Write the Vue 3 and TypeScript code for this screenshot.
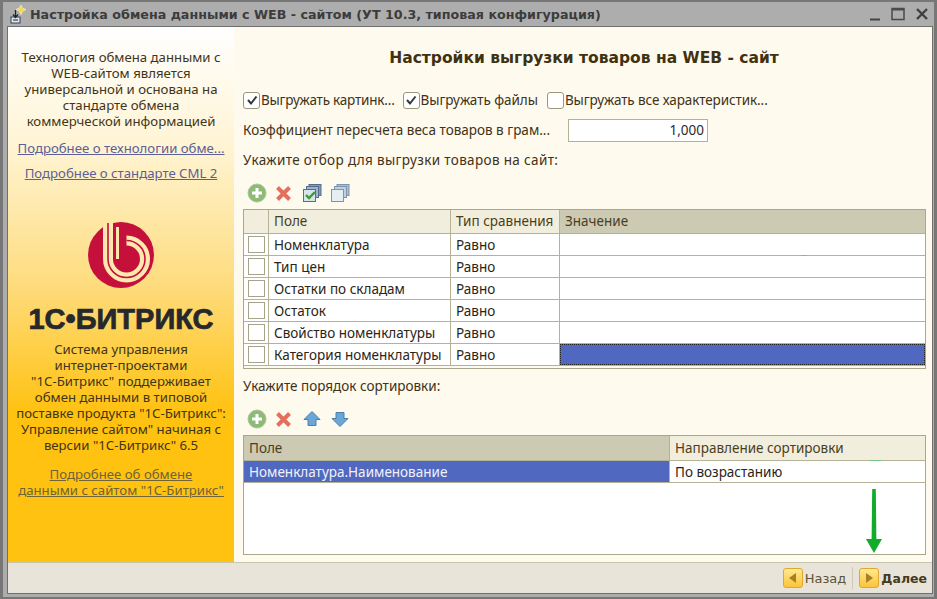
<script setup lang="ts">
const filterRows: string[] = ['Номенклатура', 'Тип цен', 'Остатки по складам', 'Остаток', 'Свойство номенклатуры', 'Категория номенклатуры']
</script>

<template>
  <div class="window">
    <header class="titlebar">
      <svg class="app-icon" width="19" height="20" viewBox="2 0 19 20">
        <path d="M15 1l1.600 3.200L20 5.500l-3.200 1.600L15 10.500l-1.700-3.400L10 5.500l3.300-1.300z" fill="#f7d84e" stroke="#fff6c0" stroke-width=".6"/>
        <rect x="5" y="13" width="9" height="6" fill="#dfe6ee" stroke="#3a4150"/>
        <path d="M9.500 6v7M7 10.500l2.500 3 2.500-3" fill="none" stroke="#20242c" stroke-width="1.300"/>
        <path d="M7 16h5" stroke="#20242c"/>
      </svg>
      <span class="title">Настройка обмена данными с WEB - сайтом (УТ 10.3, типовая конфигурация)</span>
      <span class="win-btns">
        <svg width="13" height="13" viewBox="0 0 13 13"><path d="M2 11.500h10" stroke="#444" stroke-width="2"/></svg>
        <svg width="14" height="14" viewBox="0 0 14 14"><rect x="1" y="1.500" width="12" height="11" fill="none" stroke="#4a4a4a" stroke-width="1.500"/><path d="M1 2.500h12" stroke="#4a4a4a" stroke-width="2"/></svg>
        <svg width="14" height="14" viewBox="0 0 14 14"><path d="M2 2l10 10M12 2L2 12" stroke="#404040" stroke-width="2.400"/></svg>
      </span>
    </header>

    <div class="frame">
      <div class="content">
        <aside class="side">
          <p class="side-text intro">Технология обмена данными с<br>WEB-сайтом является<br>универсальной и основана на<br>стандарте обмена<br>коммерческой информацией</p>
          <a class="link first">Подробнее о технологии обме...</a>
          <a class="link second">Подробнее о стандарте CML 2</a>
          <svg class="logo" width="80" height="80" viewBox="0 0 80 80">
            <circle cx="40" cy="40" r="33" fill="#c4103a"/>
            <path d="M27 8V44A18.500 18.500 0 1 0 45.500 25.500" fill="none" stroke="#fde9ae" stroke-width="10"/>
            <path d="M27 8V44A18.500 18.500 0 1 0 45.500 25.500" fill="none" stroke="#c4103a" stroke-width="1.600"/>
            <circle cx="45.500" cy="44" r="9.500" fill="#c4103a"/>
            <path d="M36.500 12V44" stroke="#fde9ae" stroke-width="3"/>
          </svg>
          <div class="brand">1С•БИТРИКС</div>
          <p class="side-text about">Система управления<br>интернет-проектами<br>"1С-Битрикс" поддерживает<br>обмен данными в типовой<br>поставке продукта "1С-Битрикс":<br>Управление сайтом" начиная с<br>версии "1С-Битрикс" 6.5</p>
          <a class="link third">Подробнее об обмене<br>данными с сайтом "1С-Битрикс"</a>
        </aside>

        <main class="main">
          <h1 class="heading">Настройки выгрузки товаров на WEB - сайт</h1>

          <div class="checks">
            <label class="check c1"><span class="box"><svg width="12" height="12" viewBox="0 0 12 12"><path d="M2 6l3 3.500L10.500 2.500" fill="none" stroke="#33363c" stroke-width="2"/></svg></span>Выгружать картинк...</label>
            <label class="check c2"><span class="box"><svg width="12" height="12" viewBox="0 0 12 12"><path d="M2 6l3 3.500L10.500 2.500" fill="none" stroke="#33363c" stroke-width="2"/></svg></span>Выгружать файлы</label>
            <label class="check c3"><span class="box"></span>Выгружать все характеристик...</label>
          </div>

          <div class="coef">
            <span class="coef-label">Коэффициент пересчета веса товаров в грам...</span>
            <span class="input">1,000</span>
          </div>

          <div class="caption wide">Укажите отбор для выгрузки товаров на сайт:</div>

          <div class="toolbar">
            <svg width="20" height="20" viewBox="0 0 20 20"><circle cx="10" cy="10" r="9" fill="#8dbb76" stroke="#a6c89a"/><path d="M10 5v10M5 10h10" stroke="#fff" stroke-width="3"/></svg>
            <svg width="17" height="17" viewBox="0 0 17 17"><path d="M2.500 2.500l12 12M14.500 2.500l-12 12" stroke="#e2705f" stroke-width="4"/></svg>
            <svg width="20" height="20" viewBox="0 0 20 20"><rect x="7" y="1.500" width="12" height="11" fill="#7f9bb5" stroke="#54708c"/><rect x="4.500" y="3.500" width="12" height="11" fill="#9db5ca" stroke="#54708c"/><rect x="1.500" y="6.500" width="12" height="12" fill="#d8e4ec" stroke="#54708c"/><path d="M4 12l3 3 6-6" fill="none" stroke="#3b9b34" stroke-width="2.400"/></svg>
            <svg width="20" height="20" viewBox="0 0 20 20"><rect x="7" y="1.500" width="12" height="11" fill="#a9bdd0" stroke="#7d96ad"/><rect x="4.500" y="3.500" width="12" height="11" fill="#c0d0dd" stroke="#7d96ad"/><rect x="1.500" y="6.500" width="12" height="12" fill="#e6eef3" stroke="#7d96ad"/></svg>
          </div>

          <div class="grid filter">
            <div class="row head">
              <div class="cell c-mark head-light"></div>
              <div class="cell c-field head-light">Поле</div>
              <div class="cell c-type head-light">Тип сравнения</div>
              <div class="cell c-value head-dark">Значение</div>
            </div>
            <div v-for="(name, i) in filterRows" :key="name" class="row">
              <div class="cell c-mark"><span class="mark"></span></div>
              <div class="cell c-field">{{ name }}</div>
              <div class="cell c-type">Равно</div>
              <div class="cell c-value" :class="{ selected: i === filterRows.length - 1 }"></div>
            </div>
            <div class="tail"></div>
          </div>

          <div class="caption second-caption">Укажите порядок сортировки:</div>

          <div class="toolbar">
            <svg width="20" height="20" viewBox="0 0 20 20"><circle cx="10" cy="10" r="9" fill="#8dbb76" stroke="#a6c89a"/><path d="M10 5v10M5 10h10" stroke="#fff" stroke-width="3"/></svg>
            <svg width="17" height="17" viewBox="0 0 17 17"><path d="M2.500 2.500l12 12M14.500 2.500l-12 12" stroke="#e2705f" stroke-width="4"/></svg>
            <svg width="20" height="20" viewBox="0 0 20 20"><path d="M10 2.500L18 10.500H14V16.500H6V10.500H2z" fill="#6aa6d6" stroke="#4a80ad"/></svg>
            <svg width="20" height="20" viewBox="0 0 20 20"><path d="M10 17.500L2 9.500H6V3.500H14V9.500H18z" fill="#6aa6d6" stroke="#4a80ad"/></svg>
          </div>

          <div class="grid sort">
            <div class="row head sort-head">
              <div class="cell s-field head-dark">Поле</div>
              <div class="cell s-dir head-light">Направление сортировки</div>
            </div>
            <div class="row sort-row">
              <div class="cell s-field selected">Номенклатура.Наименование</div>
              <div class="cell s-dir">По возрастанию</div>
            </div>
            <div class="sort-empty"></div>
          </div>

          <svg class="arrow" width="18" height="66" viewBox="0 0 18 66"><path d="M7.200 1h3.600l.6 50H17L9 65 1 51h5.600z" fill="#12ab2a"/></svg>
          <span class="speck s1"></span>
          <span class="speck s2"></span>
        </main>
      </div>

      <footer class="footer">
        <span class="nav-btn"><svg width="9" height="12" viewBox="0 0 9 12"><path d="M8 1v10L1 6z" fill="#a78024"/></svg></span>
        <span class="nav-label">Назад</span>
        <span class="sep"></span>
        <span class="nav-btn"><svg width="9" height="12" viewBox="0 0 9 12"><path d="M1 1v10l7-5z" fill="#a78024"/></svg></span>
        <span class="nav-label strong">Далее</span>
      </footer>
    </div>
  </div>
</template>

<style scoped>
.window {
  width: 937px;
  height: 599px;
  box-sizing: border-box;
  display: flex;
  flex-direction: column;
  background: #adadad;
  border: solid #777;
  border-width: 2px 3px 2px 3px;
  padding: 0 2px 3px 5px;
  font-family: "Noto Sans", sans-serif;
  font-size: 13.500px;
  color: #3e3218;
  overflow: hidden;
}
.titlebar {
  height: 24px;
  flex: none;
  display: flex;
  align-items: center;
}
.app-icon { margin-right: 3px; flex: none; }
.title {
  font-family: "DejaVu Sans", sans-serif;
  font-weight: 700;
  font-size: 12.700px;
  color: #3c3c3c;
  white-space: nowrap;
}
.win-btns {
  margin-left: auto;
  display: flex;
  align-items: center;
  gap: 10px;
  margin-right: 3px;
}
.frame {
  flex: 1;
  min-height: 0;
  display: flex;
  flex-direction: column;
  border: 1px solid #6f6f6f;
  margin: 0 -1px;
}
.content {
  flex: 1;
  min-height: 0;
  display: flex;
}
.side {
  width: 226px;
  flex: none;
  display: flex;
  flex-direction: column;
  align-items: center;
  text-align: center;
  font-size: 13.200px;
  background: linear-gradient(180deg, #ffffff 0%, #fff4d4 22%, #fedc7e 48%, #ffc211 72%, #ffc211 100%);
}
.side-text { margin: 0; line-height: 16px; white-space: nowrap; color: #3f3518; }
.intro { margin-top: 22px; }
.link {
  text-decoration: underline;
  white-space: nowrap;
  line-height: 16px;
  color: #5d5f98;
}
.first { margin-top: 11px; }
.second { margin-top: 9px; }
.logo { margin-top: 34px; flex: none; }
.brand {
  margin-top: 8px;
  font-family: "Liberation Sans", sans-serif;
  font-weight: 700;
  font-size: 29px;
  line-height: 32px;
  color: #26282c;
  -webkit-text-stroke: .7px #26282c;
  white-space: nowrap;
}
.about { margin-top: 6px; }
.third { margin-top: 13px; color: #6f6338; }
.main {
  flex: 1;
  min-width: 0;
  position: relative;
  box-sizing: border-box;
  padding: 0 4px 0 9px;
  background: #fffaee;
}
.heading {
  margin: 20px 3px 0 0;
  font-family: "DejaVu Sans", sans-serif;
  font-size: 15.500px;
  line-height: 22px;
  font-weight: 700;
  text-align: center;
  color: #3e3212;
}
.checks {
  margin-top: 22px;
  display: flex;
  height: 18px;
  align-items: center;
}
.check { display: flex; align-items: center; white-space: nowrap; gap: 1px; }
.c1 { margin-right: 8px; letter-spacing: -.2px; }
.c2 { margin-right: 9px; letter-spacing: -.05px; }
.c3 { letter-spacing: -.1px; }
.box {
  width: 15px;
  height: 15px;
  border: 1px solid #9a967f;
  border-radius: 3px;
  background: #fff;
  display: flex;
  align-items: center;
  justify-content: center;
  flex: none;
}
.coef {
  margin-top: 10px;
  display: flex;
  align-items: center;
  height: 23px;
}
.coef-label { width: 325px; white-space: nowrap; flex: none; padding-bottom: 2px; box-sizing: border-box; }
.input {
  width: 140px;
  height: 23px;
  box-sizing: border-box;
  border: 1px solid #b5b196;
  background: #fff;
  text-align: right;
  padding-right: 3px;
  line-height: 21px;
  color: #2b2b2b;
}
.caption { margin-top: 11px; line-height: 14px; height: 16px; }
.wide { letter-spacing: .35px; }
.second-caption { margin-top: 10px; }
.toolbar {
  margin-top: 14px;
  height: 20px;
  display: flex;
  align-items: center;
  gap: 8px;
  padding-left: 4px;
}
.toolbar svg:nth-child(2) { margin-right: 2px; }
.grid {
  width: 683px;
  box-sizing: border-box;
  margin-top: 6px;
  border: 1px solid #aaa88c;
  background: #fff;
}
.row { display: flex; height: 22px; border-bottom: 1px solid #b5b296; box-sizing: border-box; }
.head { height: 24px; }
.cell {
  box-sizing: border-box;
  border-right: 1px solid #b5b296;
  padding-left: 5px;
  line-height: 22px;
  white-space: nowrap;
  overflow: hidden;
  color: #2b2416;
}
.head .cell { line-height: 23px; color: #4a3e22; }
.head-light { background: #f1eedd; }
.head-dark { background: #cdcab4; }
.c-mark { width: 25px; padding: 0 0 0 1px; display: flex; align-items: center; justify-content: center; }
.c-field { width: 182px; }
.c-type { width: 109px; }
.c-value { flex: 1; border-right: 0; }
.mark { width: 17px; height: 17px; box-sizing: border-box; border: 1px solid #a6a38a; background: #fff; }
.selected { background: #5068bf; color: #f0f2fa; }
.c-value.selected { outline: 1px dotted #222; outline-offset: -1px; }
.tail { height: 2px; background: #fffaee; }
.sort { height: 120px; }
.sort-head { height: 25px; }
.sort-row { height: 22px; }
.s-field { width: 426px; }
.s-dir { flex: 1; border-right: 0; }
.sort .head .cell { line-height: 24px; }
.arrow { position: absolute; left: 631px; top: 461px; }
.speck { position: absolute; height: 1px; background: #72c47e; }
.s1 { left: 567px; top: 228px; width: 5px; }
.s2 { left: 635px; top: 433px; width: 12px; }
.footer {
  height: 31px;
  flex: none;
  box-sizing: border-box;
  border-top: 1px solid #c9c6ae;
  background: #e9e4d9;
  display: flex;
  align-items: center;
  justify-content: flex-end;
  padding-right: 5px;
  color: #5d5338;
  font-family: "DejaVu Sans", sans-serif;
  font-size: 13px;
}
.nav-btn {
  width: 20px;
  height: 20px;
  box-sizing: border-box;
  border: 1px solid #dfa92d;
  border-radius: 3px;
  background: linear-gradient(180deg, #ffe98f, #fbc43a);
  display: flex;
  align-items: center;
  justify-content: center;
  margin-right: 2px;
}
.sep { width: 1px; height: 22px; background: #cfc9b6; margin: 0 6px; }
.strong { font-weight: 700; font-size: 12.500px; color: #453a1e; }
</style>

<style>
html, body { margin: 0; padding: 0; background: #777; overflow: hidden; }
</style>
